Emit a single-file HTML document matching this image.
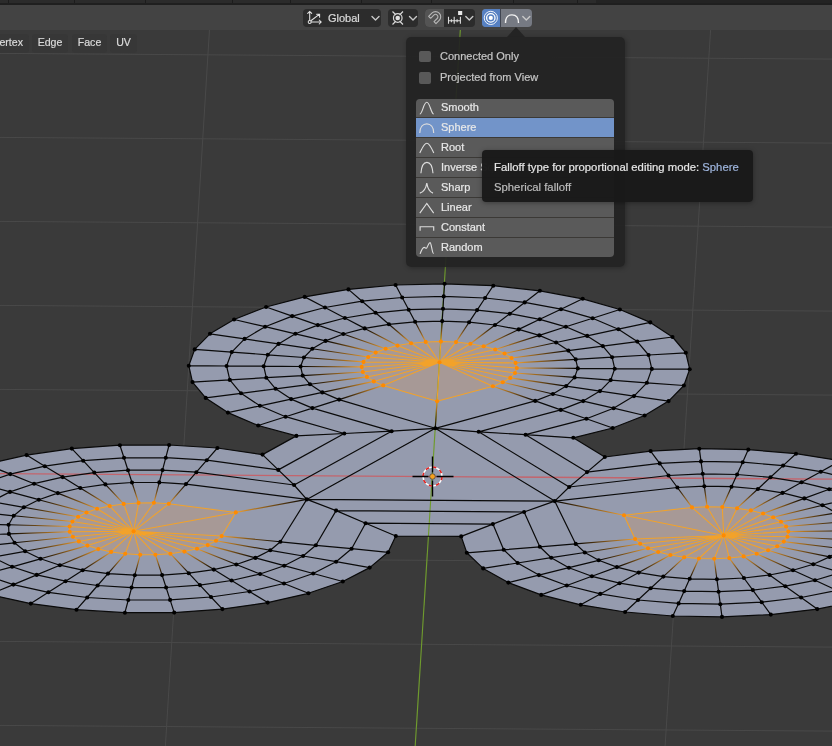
<!DOCTYPE html>
<html><head><meta charset="utf-8">
<style>
*{margin:0;padding:0;box-sizing:border-box}
html,body{-webkit-text-stroke:0.2px currentColor;width:832px;height:746px;overflow:hidden;background:#3a3a3a;font-family:"Liberation Sans",sans-serif}
#vp{position:absolute;left:0;top:0;width:832px;height:746px}
.abs{position:absolute}
.t{will-change:transform}
#topstrip{position:absolute;left:0;top:0;width:832px;height:5px;background:#2b2b2b;border-bottom:2px solid #1f1f1f}
.tsep{position:absolute;top:0;width:1px;height:3px;background:#1c1c1c}
#header{position:absolute;left:0;top:5px;width:832px;height:25px;background:#434343}
.btn{position:absolute;border-radius:4px}
.modebtn{position:absolute;will-change:transform;top:34px;height:18.5px;background:#373737;border-radius:3px;color:#dadada;font-size:10.6px;line-height:17px;text-align:center}
#popup{position:absolute;left:405.5px;top:36.8px;width:219px;height:230.3px;background:rgba(34,34,34,0.93);border-radius:5px;box-shadow:1px 1px 5px rgba(0,0,0,0.3)}
#ptr{position:absolute;left:506.8px;top:26.8px;width:0;height:0;border-left:9.5px solid transparent;border-right:9.5px solid transparent;border-bottom:10px solid rgba(34,34,34,0.93)}
.cb{position:absolute;left:13.3px;width:12.4px;height:11.6px;background:#595959;border-radius:2px}
.cbl{position:absolute;will-change:transform;left:34.2px;color:#c6c6c6;font-size:11px;line-height:14px;white-space:nowrap}
#list{position:absolute;left:10.5px;top:62px;width:198px;height:158px;background:#5a5a5a;border-radius:4px;overflow:hidden}
.row{position:absolute;left:0;width:198px}
.rt{position:absolute;will-change:transform;left:24.8px;color:#e8e8e8;font-size:11px;line-height:18px;white-space:nowrap}
.ico{position:absolute;left:0}
.sep{position:absolute;left:0;width:198px;height:1.2px;background:#3b3936}
#tip{position:absolute;left:481.5px;top:150px;width:271.5px;height:52px;background:rgba(25,25,25,0.98);border-radius:4px;box-shadow:0 1px 5px rgba(0,0,0,0.35)}
.tt{position:absolute;will-change:transform;left:12.3px;font-size:11.3px;line-height:14px;white-space:nowrap}
</style></head><body>
<svg id="vp" width="832" height="746" viewBox="0 0 832 746">
<path d="M0 53.4L832 59.1M0 137.4L832 143.1M0 221.4L832 227.1M0 305.4L832 311.1M0 389.4L832 395.1M0 557.4L832 563.1M0 641.4L832 647.1M0 725.4L832 731.1M211.3 0L165.4 746M712.5 0L665.1 746" stroke="#494949" stroke-width="1" fill="none"/>
<g fill="#959bae"><polygon points="612.7,428.0 644.6,415.5 668.6,401.1 683.9,385.5 689.7,369.2 685.8,352.8 672.5,337.0 650.3,322.4 619.9,309.5 582.7,298.8 539.9,290.8 493.3,285.7 444.6,283.8 395.6,285.0 348.4,289.4 304.7,296.9 266.1,307.0 234.1,319.5 210.0,333.8 194.7,349.4 188.8,365.7 192.5,382.1 205.7,397.9 227.9,412.6 258.2,425.5 296.4,435.9 344.3,433.5 391.6,431.2 435.3,428.3 478.7,431.8 525.6,434.7 573.3,437.8"/><polygon points="435.3,428.3 391.6,431.2 344.3,433.5 296.4,435.9 262.5,454.6 278.3,469.9 294.1,485.0 306.8,499.4"/><polygon points="217.4,448.0 169.1,445.0 119.9,445.2 71.8,448.6 26.6,455.1 -14.0,464.4 -48.5,476.2 -75.4,490.0 -93.8,505.3 -103.0,521.5 -102.5,538.0 -92.5,554.2 -73.3,569.4 -45.5,583.0 -10.4,594.5 30.8,603.6 76.5,609.7 124.9,612.7 174.2,612.6 222.4,609.1 267.7,602.6 308.4,593.3 342.8,581.5 369.7,567.6 388.1,552.3 395.8,536.0 365.6,523.2 336.1,510.6 306.8,499.4 294.1,485.0 278.3,469.9 262.5,454.6"/><polygon points="306.8,499.4 336.1,510.6 365.6,523.2 395.8,536.0 461.2,536.4 492.9,524.1 524.1,512.0 554.7,501.1"/><polygon points="466.8,552.8 483.2,568.4 508.3,582.6 541.2,594.9 580.7,604.8 625.1,612.0 672.8,616.0 722.0,616.9 770.8,614.6 817.2,609.1 859.6,600.6 896.2,589.6 925.6,576.4 946.8,561.5 958.9,545.5 961.4,529.0 954.3,512.7 937.9,497.1 912.7,482.9 879.8,470.7 840.4,460.8 796.0,453.7 748.3,449.6 699.3,448.7 650.6,451.1 604.8,457.0 587.0,472.1 569.2,487.0 554.7,501.1 524.1,512.0 492.9,524.1 461.2,536.4"/><polygon points="554.7,501.1 569.2,487.0 587.0,472.1 604.8,457.0 573.3,437.8 525.6,434.7 478.7,431.8 435.3,428.3"/><polygon points="435.3,428.3 306.8,499.4 554.7,501.1"/></g>
<g fill="#c8946a" fill-opacity="0.35"><polygon points="492.9,386.2 502.8,382.3 510.3,377.9 515.0,373.0 516.8,368.0 515.6,362.9 511.5,358.0 504.6,353.5 495.2,349.5 483.7,346.2 470.4,343.7 456.0,342.1 440.9,341.5 425.7,341.9 411.1,343.3 397.5,345.6 385.6,348.7 375.7,352.6 368.2,357.0 363.5,361.9 361.7,366.9 362.8,372.0 366.9,376.9 373.8,381.4 383.2,385.4 437.1,401.3"/><polygon points="168.8,503.8 153.9,502.8 138.6,502.9 123.7,503.9 109.7,506.0 97.1,508.8 86.5,512.5 78.1,516.8 72.4,521.5 69.6,526.5 69.7,531.7 72.9,536.7 78.8,541.4 87.4,545.6 98.3,549.1 111.1,551.9 125.2,553.8 140.2,554.8 155.4,554.7 170.4,553.7 184.4,551.6 197.0,548.8 207.7,545.1 216.0,540.8 221.7,536.1 235.8,512.4"/><polygon points="635.1,539.0 640.2,543.8 648.0,548.2 658.2,552.0 670.4,555.0 684.2,557.3 698.9,558.5 714.2,558.8 729.3,558.1 743.6,556.4 756.7,553.8 768.1,550.3 777.2,546.2 783.8,541.6 787.5,536.7 788.3,531.6 786.1,526.5 781.0,521.7 773.2,517.3 763.1,513.5 750.8,510.4 737.1,508.2 722.3,507.0 707.1,506.7 692.0,507.4 624.0,515.2"/></g>

<path d="M462.2 0L415.2 746" stroke="#6f9b2e" stroke-width="1.15" fill="none"/>
<path d="M0 473.6L832 479.2" stroke="#c4646c" stroke-width="1.3" fill="none"/>
<defs><linearGradient id="g0" gradientUnits="userSpaceOnUse" x1="492.9" y1="386.2" x2="535.2" y2="400.9"><stop offset="0" stop-color="#f0a030"/><stop offset="1" stop-color="#000"/></linearGradient><linearGradient id="g1" gradientUnits="userSpaceOnUse" x1="502.8" y1="382.3" x2="552.9" y2="394.0"><stop offset="0" stop-color="#f0a030"/><stop offset="1" stop-color="#000"/></linearGradient><linearGradient id="g2" gradientUnits="userSpaceOnUse" x1="510.3" y1="377.9" x2="566.2" y2="386.1"><stop offset="0" stop-color="#f0a030"/><stop offset="1" stop-color="#000"/></linearGradient><linearGradient id="g3" gradientUnits="userSpaceOnUse" x1="515.0" y1="373.0" x2="574.6" y2="377.4"><stop offset="0" stop-color="#f0a030"/><stop offset="1" stop-color="#000"/></linearGradient><linearGradient id="g4" gradientUnits="userSpaceOnUse" x1="516.8" y1="368.0" x2="577.8" y2="368.4"><stop offset="0" stop-color="#f0a030"/><stop offset="1" stop-color="#000"/></linearGradient><linearGradient id="g5" gradientUnits="userSpaceOnUse" x1="515.6" y1="362.9" x2="575.7" y2="359.4"><stop offset="0" stop-color="#f0a030"/><stop offset="1" stop-color="#000"/></linearGradient><linearGradient id="g6" gradientUnits="userSpaceOnUse" x1="511.5" y1="358.0" x2="568.4" y2="350.6"><stop offset="0" stop-color="#f0a030"/><stop offset="1" stop-color="#000"/></linearGradient><linearGradient id="g7" gradientUnits="userSpaceOnUse" x1="504.6" y1="353.5" x2="556.1" y2="342.5"><stop offset="0" stop-color="#f0a030"/><stop offset="1" stop-color="#000"/></linearGradient><linearGradient id="g8" gradientUnits="userSpaceOnUse" x1="495.2" y1="349.5" x2="539.3" y2="335.4"><stop offset="0" stop-color="#f0a030"/><stop offset="1" stop-color="#000"/></linearGradient><linearGradient id="g9" gradientUnits="userSpaceOnUse" x1="483.7" y1="346.2" x2="518.7" y2="329.4"><stop offset="0" stop-color="#f0a030"/><stop offset="1" stop-color="#000"/></linearGradient><linearGradient id="g10" gradientUnits="userSpaceOnUse" x1="470.4" y1="343.7" x2="495.0" y2="325.0"><stop offset="0" stop-color="#f0a030"/><stop offset="1" stop-color="#000"/></linearGradient><linearGradient id="g11" gradientUnits="userSpaceOnUse" x1="456.0" y1="342.1" x2="469.1" y2="322.2"><stop offset="0" stop-color="#f0a030"/><stop offset="1" stop-color="#000"/></linearGradient><linearGradient id="g12" gradientUnits="userSpaceOnUse" x1="440.9" y1="341.5" x2="442.2" y2="321.1"><stop offset="0" stop-color="#f0a030"/><stop offset="1" stop-color="#000"/></linearGradient><linearGradient id="g13" gradientUnits="userSpaceOnUse" x1="425.7" y1="341.9" x2="415.1" y2="321.8"><stop offset="0" stop-color="#f0a030"/><stop offset="1" stop-color="#000"/></linearGradient><linearGradient id="g14" gradientUnits="userSpaceOnUse" x1="411.1" y1="343.3" x2="388.9" y2="324.3"><stop offset="0" stop-color="#f0a030"/><stop offset="1" stop-color="#000"/></linearGradient><linearGradient id="g15" gradientUnits="userSpaceOnUse" x1="397.5" y1="345.6" x2="364.7" y2="328.4"><stop offset="0" stop-color="#f0a030"/><stop offset="1" stop-color="#000"/></linearGradient><linearGradient id="g16" gradientUnits="userSpaceOnUse" x1="385.6" y1="348.7" x2="343.3" y2="334.0"><stop offset="0" stop-color="#f0a030"/><stop offset="1" stop-color="#000"/></linearGradient><linearGradient id="g17" gradientUnits="userSpaceOnUse" x1="375.7" y1="352.6" x2="325.6" y2="340.9"><stop offset="0" stop-color="#f0a030"/><stop offset="1" stop-color="#000"/></linearGradient><linearGradient id="g18" gradientUnits="userSpaceOnUse" x1="368.2" y1="357.0" x2="312.3" y2="348.8"><stop offset="0" stop-color="#f0a030"/><stop offset="1" stop-color="#000"/></linearGradient><linearGradient id="g19" gradientUnits="userSpaceOnUse" x1="363.5" y1="361.9" x2="303.9" y2="357.5"><stop offset="0" stop-color="#f0a030"/><stop offset="1" stop-color="#000"/></linearGradient><linearGradient id="g20" gradientUnits="userSpaceOnUse" x1="361.7" y1="366.9" x2="300.6" y2="366.5"><stop offset="0" stop-color="#f0a030"/><stop offset="1" stop-color="#000"/></linearGradient><linearGradient id="g21" gradientUnits="userSpaceOnUse" x1="362.8" y1="372.0" x2="302.7" y2="375.6"><stop offset="0" stop-color="#f0a030"/><stop offset="1" stop-color="#000"/></linearGradient><linearGradient id="g22" gradientUnits="userSpaceOnUse" x1="366.9" y1="376.9" x2="310.0" y2="384.3"><stop offset="0" stop-color="#f0a030"/><stop offset="1" stop-color="#000"/></linearGradient><linearGradient id="g23" gradientUnits="userSpaceOnUse" x1="373.8" y1="381.4" x2="322.3" y2="392.4"><stop offset="0" stop-color="#f0a030"/><stop offset="1" stop-color="#000"/></linearGradient><linearGradient id="g24" gradientUnits="userSpaceOnUse" x1="383.2" y1="385.4" x2="339.1" y2="399.6"><stop offset="0" stop-color="#f0a030"/><stop offset="1" stop-color="#000"/></linearGradient><linearGradient id="g25" gradientUnits="userSpaceOnUse" x1="437.1" y1="401.3" x2="435.3" y2="428.3"><stop offset="0" stop-color="#f0a030"/><stop offset="1" stop-color="#000"/></linearGradient><linearGradient id="g26" gradientUnits="userSpaceOnUse" x1="168.8" y1="503.8" x2="186.0" y2="484.1"><stop offset="0" stop-color="#f0a030"/><stop offset="1" stop-color="#000"/></linearGradient><linearGradient id="g27" gradientUnits="userSpaceOnUse" x1="153.9" y1="502.8" x2="159.3" y2="482.4"><stop offset="0" stop-color="#f0a030"/><stop offset="1" stop-color="#000"/></linearGradient><linearGradient id="g28" gradientUnits="userSpaceOnUse" x1="138.6" y1="502.9" x2="132.0" y2="482.5"><stop offset="0" stop-color="#f0a030"/><stop offset="1" stop-color="#000"/></linearGradient><linearGradient id="g29" gradientUnits="userSpaceOnUse" x1="123.7" y1="503.9" x2="105.4" y2="484.4"><stop offset="0" stop-color="#f0a030"/><stop offset="1" stop-color="#000"/></linearGradient><linearGradient id="g30" gradientUnits="userSpaceOnUse" x1="109.7" y1="506.0" x2="80.3" y2="488.0"><stop offset="0" stop-color="#f0a030"/><stop offset="1" stop-color="#000"/></linearGradient><linearGradient id="g31" gradientUnits="userSpaceOnUse" x1="97.1" y1="508.8" x2="57.8" y2="493.1"><stop offset="0" stop-color="#f0a030"/><stop offset="1" stop-color="#000"/></linearGradient><linearGradient id="g32" gradientUnits="userSpaceOnUse" x1="86.5" y1="512.5" x2="38.8" y2="499.7"><stop offset="0" stop-color="#f0a030"/><stop offset="1" stop-color="#000"/></linearGradient><linearGradient id="g33" gradientUnits="userSpaceOnUse" x1="78.1" y1="516.8" x2="23.9" y2="507.3"><stop offset="0" stop-color="#f0a030"/><stop offset="1" stop-color="#000"/></linearGradient><linearGradient id="g34" gradientUnits="userSpaceOnUse" x1="72.4" y1="521.5" x2="13.7" y2="515.8"><stop offset="0" stop-color="#f0a030"/><stop offset="1" stop-color="#000"/></linearGradient><linearGradient id="g35" gradientUnits="userSpaceOnUse" x1="69.6" y1="526.5" x2="8.6" y2="524.8"><stop offset="0" stop-color="#f0a030"/><stop offset="1" stop-color="#000"/></linearGradient><linearGradient id="g36" gradientUnits="userSpaceOnUse" x1="69.7" y1="531.7" x2="8.9" y2="533.9"><stop offset="0" stop-color="#f0a030"/><stop offset="1" stop-color="#000"/></linearGradient><linearGradient id="g37" gradientUnits="userSpaceOnUse" x1="72.9" y1="536.7" x2="14.5" y2="542.8"><stop offset="0" stop-color="#f0a030"/><stop offset="1" stop-color="#000"/></linearGradient><linearGradient id="g38" gradientUnits="userSpaceOnUse" x1="78.8" y1="541.4" x2="25.1" y2="551.3"><stop offset="0" stop-color="#f0a030"/><stop offset="1" stop-color="#000"/></linearGradient><linearGradient id="g39" gradientUnits="userSpaceOnUse" x1="87.4" y1="545.6" x2="40.5" y2="558.8"><stop offset="0" stop-color="#f0a030"/><stop offset="1" stop-color="#000"/></linearGradient><linearGradient id="g40" gradientUnits="userSpaceOnUse" x1="98.3" y1="549.1" x2="59.9" y2="565.2"><stop offset="0" stop-color="#f0a030"/><stop offset="1" stop-color="#000"/></linearGradient><linearGradient id="g41" gradientUnits="userSpaceOnUse" x1="111.1" y1="551.9" x2="82.7" y2="570.2"><stop offset="0" stop-color="#f0a030"/><stop offset="1" stop-color="#000"/></linearGradient><linearGradient id="g42" gradientUnits="userSpaceOnUse" x1="125.2" y1="553.8" x2="108.0" y2="573.6"><stop offset="0" stop-color="#f0a030"/><stop offset="1" stop-color="#000"/></linearGradient><linearGradient id="g43" gradientUnits="userSpaceOnUse" x1="140.2" y1="554.8" x2="134.8" y2="575.2"><stop offset="0" stop-color="#f0a030"/><stop offset="1" stop-color="#000"/></linearGradient><linearGradient id="g44" gradientUnits="userSpaceOnUse" x1="155.4" y1="554.7" x2="162.1" y2="575.1"><stop offset="0" stop-color="#f0a030"/><stop offset="1" stop-color="#000"/></linearGradient><linearGradient id="g45" gradientUnits="userSpaceOnUse" x1="170.4" y1="553.7" x2="188.7" y2="573.2"><stop offset="0" stop-color="#f0a030"/><stop offset="1" stop-color="#000"/></linearGradient><linearGradient id="g46" gradientUnits="userSpaceOnUse" x1="184.4" y1="551.6" x2="213.8" y2="569.6"><stop offset="0" stop-color="#f0a030"/><stop offset="1" stop-color="#000"/></linearGradient><linearGradient id="g47" gradientUnits="userSpaceOnUse" x1="197.0" y1="548.8" x2="236.3" y2="564.5"><stop offset="0" stop-color="#f0a030"/><stop offset="1" stop-color="#000"/></linearGradient><linearGradient id="g48" gradientUnits="userSpaceOnUse" x1="207.7" y1="545.1" x2="255.4" y2="557.9"><stop offset="0" stop-color="#f0a030"/><stop offset="1" stop-color="#000"/></linearGradient><linearGradient id="g49" gradientUnits="userSpaceOnUse" x1="216.0" y1="540.8" x2="270.3" y2="550.3"><stop offset="0" stop-color="#f0a030"/><stop offset="1" stop-color="#000"/></linearGradient><linearGradient id="g50" gradientUnits="userSpaceOnUse" x1="221.7" y1="536.1" x2="280.4" y2="541.8"><stop offset="0" stop-color="#f0a030"/><stop offset="1" stop-color="#000"/></linearGradient><linearGradient id="g51" gradientUnits="userSpaceOnUse" x1="235.8" y1="512.4" x2="306.8" y2="499.4"><stop offset="0" stop-color="#f0a030"/><stop offset="1" stop-color="#000"/></linearGradient><linearGradient id="g52" gradientUnits="userSpaceOnUse" x1="635.1" y1="539.0" x2="575.7" y2="543.9"><stop offset="0" stop-color="#f0a030"/><stop offset="1" stop-color="#000"/></linearGradient><linearGradient id="g53" gradientUnits="userSpaceOnUse" x1="640.2" y1="543.8" x2="584.8" y2="552.5"><stop offset="0" stop-color="#f0a030"/><stop offset="1" stop-color="#000"/></linearGradient><linearGradient id="g54" gradientUnits="userSpaceOnUse" x1="648.0" y1="548.2" x2="598.7" y2="560.3"><stop offset="0" stop-color="#f0a030"/><stop offset="1" stop-color="#000"/></linearGradient><linearGradient id="g55" gradientUnits="userSpaceOnUse" x1="658.2" y1="552.0" x2="616.9" y2="567.1"><stop offset="0" stop-color="#f0a030"/><stop offset="1" stop-color="#000"/></linearGradient><linearGradient id="g56" gradientUnits="userSpaceOnUse" x1="670.4" y1="555.0" x2="638.7" y2="572.6"><stop offset="0" stop-color="#f0a030"/><stop offset="1" stop-color="#000"/></linearGradient><linearGradient id="g57" gradientUnits="userSpaceOnUse" x1="684.2" y1="557.3" x2="663.3" y2="576.6"><stop offset="0" stop-color="#f0a030"/><stop offset="1" stop-color="#000"/></linearGradient><linearGradient id="g58" gradientUnits="userSpaceOnUse" x1="698.9" y1="558.5" x2="689.7" y2="578.8"><stop offset="0" stop-color="#f0a030"/><stop offset="1" stop-color="#000"/></linearGradient><linearGradient id="g59" gradientUnits="userSpaceOnUse" x1="714.2" y1="558.8" x2="716.9" y2="579.3"><stop offset="0" stop-color="#f0a030"/><stop offset="1" stop-color="#000"/></linearGradient><linearGradient id="g60" gradientUnits="userSpaceOnUse" x1="729.3" y1="558.1" x2="743.9" y2="578.0"><stop offset="0" stop-color="#f0a030"/><stop offset="1" stop-color="#000"/></linearGradient><linearGradient id="g61" gradientUnits="userSpaceOnUse" x1="743.6" y1="556.4" x2="769.6" y2="575.0"><stop offset="0" stop-color="#f0a030"/><stop offset="1" stop-color="#000"/></linearGradient><linearGradient id="g62" gradientUnits="userSpaceOnUse" x1="756.7" y1="553.8" x2="793.0" y2="570.3"><stop offset="0" stop-color="#f0a030"/><stop offset="1" stop-color="#000"/></linearGradient><linearGradient id="g63" gradientUnits="userSpaceOnUse" x1="768.1" y1="550.3" x2="813.3" y2="564.2"><stop offset="0" stop-color="#f0a030"/><stop offset="1" stop-color="#000"/></linearGradient><linearGradient id="g64" gradientUnits="userSpaceOnUse" x1="777.2" y1="546.2" x2="829.6" y2="556.9"><stop offset="0" stop-color="#f0a030"/><stop offset="1" stop-color="#000"/></linearGradient><linearGradient id="g65" gradientUnits="userSpaceOnUse" x1="783.8" y1="541.6" x2="841.3" y2="548.6"><stop offset="0" stop-color="#f0a030"/><stop offset="1" stop-color="#000"/></linearGradient><linearGradient id="g66" gradientUnits="userSpaceOnUse" x1="787.5" y1="536.7" x2="848.0" y2="539.8"><stop offset="0" stop-color="#f0a030"/><stop offset="1" stop-color="#000"/></linearGradient><linearGradient id="g67" gradientUnits="userSpaceOnUse" x1="788.3" y1="531.6" x2="849.4" y2="530.7"><stop offset="0" stop-color="#f0a030"/><stop offset="1" stop-color="#000"/></linearGradient><linearGradient id="g68" gradientUnits="userSpaceOnUse" x1="786.1" y1="526.5" x2="845.5" y2="521.6"><stop offset="0" stop-color="#f0a030"/><stop offset="1" stop-color="#000"/></linearGradient><linearGradient id="g69" gradientUnits="userSpaceOnUse" x1="781.0" y1="521.7" x2="836.4" y2="513.0"><stop offset="0" stop-color="#f0a030"/><stop offset="1" stop-color="#000"/></linearGradient><linearGradient id="g70" gradientUnits="userSpaceOnUse" x1="773.2" y1="517.3" x2="822.5" y2="505.2"><stop offset="0" stop-color="#f0a030"/><stop offset="1" stop-color="#000"/></linearGradient><linearGradient id="g71" gradientUnits="userSpaceOnUse" x1="763.1" y1="513.5" x2="804.3" y2="498.4"><stop offset="0" stop-color="#f0a030"/><stop offset="1" stop-color="#000"/></linearGradient><linearGradient id="g72" gradientUnits="userSpaceOnUse" x1="750.8" y1="510.4" x2="782.5" y2="492.9"><stop offset="0" stop-color="#f0a030"/><stop offset="1" stop-color="#000"/></linearGradient><linearGradient id="g73" gradientUnits="userSpaceOnUse" x1="737.1" y1="508.2" x2="757.9" y2="489.0"><stop offset="0" stop-color="#f0a030"/><stop offset="1" stop-color="#000"/></linearGradient><linearGradient id="g74" gradientUnits="userSpaceOnUse" x1="722.3" y1="507.0" x2="731.5" y2="486.7"><stop offset="0" stop-color="#f0a030"/><stop offset="1" stop-color="#000"/></linearGradient><linearGradient id="g75" gradientUnits="userSpaceOnUse" x1="707.1" y1="506.7" x2="704.3" y2="486.2"><stop offset="0" stop-color="#f0a030"/><stop offset="1" stop-color="#000"/></linearGradient><linearGradient id="g76" gradientUnits="userSpaceOnUse" x1="692.0" y1="507.4" x2="677.4" y2="487.5"><stop offset="0" stop-color="#f0a030"/><stop offset="1" stop-color="#000"/></linearGradient><linearGradient id="g77" gradientUnits="userSpaceOnUse" x1="624.0" y1="515.2" x2="554.7" y2="501.1"><stop offset="0" stop-color="#f0a030"/><stop offset="1" stop-color="#000"/></linearGradient></defs>
<path d="M535.2 400.9L552.9 394.0M560.8 409.9L583.2 401.1M586.4 418.8L613.6 408.2M612.7 428.0L644.6 415.5M552.9 394.0L566.2 386.1M583.2 401.1L600.0 391.1M613.6 408.2L634.0 396.1M644.6 415.5L668.6 401.1M566.2 386.1L574.6 377.4M600.0 391.1L610.7 380.1M634.0 396.1L646.9 382.8M668.6 401.1L683.9 385.5M574.6 377.4L577.8 368.4M610.7 380.1L614.7 368.7M646.9 382.8L651.8 368.9M683.9 385.5L689.7 369.2M577.8 368.4L575.7 359.4M614.7 368.7L612.1 357.2M651.8 368.9L648.6 355.0M689.7 369.2L685.8 352.8M575.7 359.4L568.4 350.6M612.1 357.2L602.8 346.1M648.6 355.0L637.3 341.6M685.8 352.8L672.5 337.0M568.4 350.6L556.1 342.5M602.8 346.1L587.2 335.9M637.3 341.6L618.4 329.2M672.5 337.0L650.3 322.4M556.1 342.5L539.3 335.4M587.2 335.9L565.9 326.8M618.4 329.2L592.6 318.2M650.3 322.4L619.9 309.5M539.3 335.4L518.7 329.4M565.9 326.8L539.8 319.3M592.6 318.2L561.0 309.2M619.9 309.5L582.7 298.8M518.7 329.4L495.0 325.0M539.8 319.3L509.8 313.7M561.0 309.2L524.7 302.4M582.7 298.8L539.9 290.8M495.0 325.0L469.1 322.2M509.8 313.7L477.1 310.1M524.7 302.4L485.1 298.0M539.9 290.8L493.3 285.7M469.1 322.2L442.2 321.1M477.1 310.1L443.0 308.8M485.1 298.0L443.7 296.4M493.3 285.7L444.6 283.8M442.2 321.1L415.1 321.8M443.0 308.8L408.7 309.7M443.7 296.4L402.2 297.5M444.6 283.8L395.6 285.0M415.1 321.8L388.9 324.3M408.7 309.7L375.6 312.8M402.2 297.5L362.1 301.2M395.6 285.0L348.4 289.4M388.9 324.3L364.7 328.4M375.6 312.8L344.9 318.0M362.1 301.2L325.0 307.5M348.4 289.4L304.7 296.9M364.7 328.4L343.3 334.0M344.9 318.0L317.8 325.1M325.0 307.5L292.2 316.1M304.7 296.9L266.1 307.0M343.3 334.0L325.6 340.9M317.8 325.1L295.4 333.8M292.2 316.1L265.1 326.7M266.1 307.0L234.1 319.5M325.6 340.9L312.3 348.8M295.4 333.8L278.5 343.9M265.1 326.7L244.6 338.9M234.1 319.5L210.0 333.8M312.3 348.8L303.9 357.5M278.5 343.9L267.8 354.8M244.6 338.9L231.7 352.1M210.0 333.8L194.7 349.4M303.9 357.5L300.6 366.5M267.8 354.8L263.7 366.2M231.7 352.1L226.6 366.0M194.7 349.4L188.8 365.7M300.6 366.5L302.7 375.6M263.7 366.2L266.3 377.7M226.6 366.0L229.8 379.9M188.8 365.7L192.5 382.1M302.7 375.6L310.0 384.3M266.3 377.7L275.6 388.8M229.8 379.9L241.0 393.3M192.5 382.1L205.7 397.9M310.0 384.3L322.3 392.4M275.6 388.8L291.1 399.1M241.0 393.3L259.9 405.8M205.7 397.9L227.9 412.6M322.3 392.4L339.1 399.6M291.1 399.1L312.4 408.1M259.9 405.8L285.6 416.7M227.9 412.6L258.2 425.5M535.2 400.9L560.8 409.9M560.8 409.9L586.4 418.8M586.4 418.8L612.7 428.0M552.9 394.0L583.2 401.1M583.2 401.1L613.6 408.2M613.6 408.2L644.6 415.5M566.2 386.1L600.0 391.1M600.0 391.1L634.0 396.1M634.0 396.1L668.6 401.1M574.6 377.4L610.7 380.1M610.7 380.1L646.9 382.8M646.9 382.8L683.9 385.5M577.8 368.4L614.7 368.7M614.7 368.7L651.8 368.9M651.8 368.9L689.7 369.2M575.7 359.4L612.1 357.2M612.1 357.2L648.6 355.0M648.6 355.0L685.8 352.8M568.4 350.6L602.8 346.1M602.8 346.1L637.3 341.6M637.3 341.6L672.5 337.0M556.1 342.5L587.2 335.9M587.2 335.9L618.4 329.2M618.4 329.2L650.3 322.4M539.3 335.4L565.9 326.8M565.9 326.8L592.6 318.2M592.6 318.2L619.9 309.5M518.7 329.4L539.8 319.3M539.8 319.3L561.0 309.2M561.0 309.2L582.7 298.8M495.0 325.0L509.8 313.7M509.8 313.7L524.7 302.4M524.7 302.4L539.9 290.8M469.1 322.2L477.1 310.1M477.1 310.1L485.1 298.0M485.1 298.0L493.3 285.7M442.2 321.1L443.0 308.8M443.0 308.8L443.7 296.4M443.7 296.4L444.6 283.8M415.1 321.8L408.7 309.7M408.7 309.7L402.2 297.5M402.2 297.5L395.6 285.0M388.9 324.3L375.6 312.8M375.6 312.8L362.1 301.2M362.1 301.2L348.4 289.4M364.7 328.4L344.9 318.0M344.9 318.0L325.0 307.5M325.0 307.5L304.7 296.9M343.3 334.0L317.8 325.1M317.8 325.1L292.2 316.1M292.2 316.1L266.1 307.0M325.6 340.9L295.4 333.8M295.4 333.8L265.1 326.7M265.1 326.7L234.1 319.5M312.3 348.8L278.5 343.9M278.5 343.9L244.6 338.9M244.6 338.9L210.0 333.8M303.9 357.5L267.8 354.8M267.8 354.8L231.7 352.1M231.7 352.1L194.7 349.4M300.6 366.5L263.7 366.2M263.7 366.2L226.6 366.0M226.6 366.0L188.8 365.7M302.7 375.6L266.3 377.7M266.3 377.7L229.8 379.9M229.8 379.9L192.5 382.1M310.0 384.3L275.6 388.8M275.6 388.8L241.0 393.3M241.0 393.3L205.7 397.9M322.3 392.4L291.1 399.1M291.1 399.1L259.9 405.8M259.9 405.8L227.9 412.6M339.1 399.6L312.4 408.1M312.4 408.1L285.6 416.7M285.6 416.7L258.2 425.5M339.1 399.6L435.3 428.3M535.2 400.9L435.3 428.3M312.4 408.1L391.6 431.2M560.8 409.9L478.7 431.8M285.6 416.7L344.3 433.5M586.4 418.8L525.6 434.7M258.2 425.5L296.4 435.9M612.7 428.0L573.3 437.8M435.3 428.3L391.6 431.2M435.3 428.3L478.7 431.8M391.6 431.2L344.3 433.5M478.7 431.8L525.6 434.7M344.3 433.5L296.4 435.9M525.6 434.7L573.3 437.8M435.3 428.3L306.8 499.4M391.6 431.2L294.1 485.0M344.3 433.5L278.3 469.9M296.4 435.9L262.5 454.6M186.0 484.1L159.3 482.4M196.4 472.2L162.5 470.1M206.8 460.2L165.8 457.7M217.4 448.0L169.1 445.0M159.3 482.4L132.0 482.5M162.5 470.1L128.0 470.2M165.8 457.7L124.0 457.8M169.1 445.0L119.9 445.2M132.0 482.5L105.4 484.4M128.0 470.2L94.3 472.6M124.0 457.8L83.2 460.7M119.9 445.2L71.8 448.6M105.4 484.4L80.3 488.0M94.3 472.6L62.6 477.1M83.2 460.7L44.8 466.2M71.8 448.6L26.6 455.1M80.3 488.0L57.8 493.1M62.6 477.1L34.1 483.7M44.8 466.2L10.3 474.1M26.6 455.1L-14.0 464.4M57.8 493.1L38.8 499.7M34.1 483.7L10.0 491.9M10.3 474.1L-18.9 484.1M-14.0 464.4L-48.5 476.2M38.8 499.7L23.9 507.3M10.0 491.9L-8.9 501.6M-18.9 484.1L-41.8 495.9M-48.5 476.2L-75.4 490.0M23.9 507.3L13.7 515.8M-8.9 501.6L-21.8 512.3M-41.8 495.9L-57.4 508.9M-75.4 490.0L-93.8 505.3M13.7 515.8L8.6 524.8M-21.8 512.3L-28.2 523.7M-57.4 508.9L-65.2 522.6M-93.8 505.3L-103.0 521.5M8.6 524.8L8.9 533.9M-28.2 523.7L-27.9 535.3M-65.2 522.6L-64.8 536.6M-103.0 521.5L-102.5 538.0M8.9 533.9L14.5 542.8M-27.9 535.3L-20.8 546.6M-64.8 536.6L-56.3 550.4M-102.5 538.0L-92.5 554.2M14.5 542.8L25.1 551.3M-20.8 546.6L-7.3 557.2M-56.3 550.4L-39.9 563.2M-92.5 554.2L-73.3 569.4M25.1 551.3L40.5 558.8M-7.3 557.2L12.1 566.8M-39.9 563.2L-16.4 574.8M-73.3 569.4L-45.5 583.0M40.5 558.8L59.9 565.2M12.1 566.8L36.7 574.9M-16.4 574.8L13.4 584.6M-45.5 583.0L-10.4 594.5M59.9 565.2L82.7 570.2M36.7 574.9L65.6 581.2M13.4 584.6L48.4 592.3M-10.4 594.5L30.8 603.6M82.7 570.2L108.0 573.6M65.6 581.2L97.6 585.5M48.4 592.3L87.2 597.5M30.8 603.6L76.5 609.7M108.0 573.6L134.8 575.2M97.6 585.5L131.6 587.6M87.2 597.5L128.3 600.0M76.5 609.7L124.9 612.7M134.8 575.2L162.1 575.1M131.6 587.6L166.1 587.5M128.3 600.0L170.1 599.9M124.9 612.7L174.2 612.6M162.1 575.1L188.7 573.2M166.1 587.5L199.9 585.1M170.1 599.9L211.0 597.0M174.2 612.6L222.4 609.1M188.7 573.2L213.8 569.6M199.9 585.1L231.6 580.5M211.0 597.0L249.5 591.5M222.4 609.1L267.7 602.6M213.8 569.6L236.3 564.5M231.6 580.5L260.1 574.0M249.5 591.5L284.0 583.5M267.7 602.6L308.4 593.3M236.3 564.5L255.4 557.9M260.1 574.0L284.2 565.7M284.0 583.5L313.2 573.5M308.4 593.3L342.8 581.5M255.4 557.9L270.3 550.3M284.2 565.7L303.1 556.0M313.2 573.5L336.1 561.7M342.8 581.5L369.7 567.6M270.3 550.3L280.4 541.8M303.1 556.0L315.9 545.3M336.1 561.7L351.6 548.7M369.7 567.6L388.1 552.3M186.0 484.1L196.4 472.2M196.4 472.2L206.8 460.2M206.8 460.2L217.4 448.0M159.3 482.4L162.5 470.1M162.5 470.1L165.8 457.7M165.8 457.7L169.1 445.0M132.0 482.5L128.0 470.2M128.0 470.2L124.0 457.8M124.0 457.8L119.9 445.2M105.4 484.4L94.3 472.6M94.3 472.6L83.2 460.7M83.2 460.7L71.8 448.6M80.3 488.0L62.6 477.1M62.6 477.1L44.8 466.2M44.8 466.2L26.6 455.1M57.8 493.1L34.1 483.7M34.1 483.7L10.3 474.1M10.3 474.1L-14.0 464.4M38.8 499.7L10.0 491.9M10.0 491.9L-18.9 484.1M-18.9 484.1L-48.5 476.2M23.9 507.3L-8.9 501.6M-8.9 501.6L-41.8 495.9M-41.8 495.9L-75.4 490.0M13.7 515.8L-21.8 512.3M-21.8 512.3L-57.4 508.9M-57.4 508.9L-93.8 505.3M8.6 524.8L-28.2 523.7M-28.2 523.7L-65.2 522.6M-65.2 522.6L-103.0 521.5M8.9 533.9L-27.9 535.3M-27.9 535.3L-64.8 536.6M-64.8 536.6L-102.5 538.0M14.5 542.8L-20.8 546.6M-20.8 546.6L-56.3 550.4M-56.3 550.4L-92.5 554.2M25.1 551.3L-7.3 557.2M-7.3 557.2L-39.9 563.2M-39.9 563.2L-73.3 569.4M40.5 558.8L12.1 566.8M12.1 566.8L-16.4 574.8M-16.4 574.8L-45.5 583.0M59.9 565.2L36.7 574.9M36.7 574.9L13.4 584.6M13.4 584.6L-10.4 594.5M82.7 570.2L65.6 581.2M65.6 581.2L48.4 592.3M48.4 592.3L30.8 603.6M108.0 573.6L97.6 585.5M97.6 585.5L87.2 597.5M87.2 597.5L76.5 609.7M134.8 575.2L131.6 587.6M131.6 587.6L128.3 600.0M128.3 600.0L124.9 612.7M162.1 575.1L166.1 587.5M166.1 587.5L170.1 599.9M170.1 599.9L174.2 612.6M188.7 573.2L199.9 585.1M199.9 585.1L211.0 597.0M211.0 597.0L222.4 609.1M213.8 569.6L231.6 580.5M231.6 580.5L249.5 591.5M249.5 591.5L267.7 602.6M236.3 564.5L260.1 574.0M260.1 574.0L284.0 583.5M284.0 583.5L308.4 593.3M255.4 557.9L284.2 565.7M284.2 565.7L313.2 573.5M313.2 573.5L342.8 581.5M270.3 550.3L303.1 556.0M303.1 556.0L336.1 561.7M336.1 561.7L369.7 567.6M280.4 541.8L315.9 545.3M315.9 545.3L351.6 548.7M351.6 548.7L388.1 552.3M280.4 541.8L306.8 499.4M186.0 484.1L306.8 499.4M315.9 545.3L336.1 510.6M196.4 472.2L294.1 485.0M351.6 548.7L365.6 523.2M206.8 460.2L278.3 469.9M388.1 552.3L395.8 536.0M217.4 448.0L262.5 454.6M306.8 499.4L336.1 510.6M306.8 499.4L294.1 485.0M336.1 510.6L365.6 523.2M294.1 485.0L278.3 469.9M365.6 523.2L395.8 536.0M278.3 469.9L262.5 454.6M306.8 499.4L554.7 501.1M336.1 510.6L524.1 512.0M365.6 523.2L492.9 524.1M395.8 536.0L461.2 536.4M575.7 543.9L584.8 552.5M539.8 546.8L551.2 557.7M503.7 549.8L517.6 563.0M466.8 552.8L483.2 568.4M584.8 552.5L598.7 560.3M551.2 557.7L568.9 567.7M517.6 563.0L538.9 575.1M483.2 568.4L508.3 582.6M598.7 560.3L616.9 567.1M568.9 567.7L591.9 576.3M538.9 575.1L566.8 585.5M508.3 582.6L541.2 594.9M616.9 567.1L638.7 572.6M591.9 576.3L619.6 583.2M566.8 585.5L600.3 593.9M541.2 594.9L580.7 604.8M638.7 572.6L663.3 576.6M619.6 583.2L650.7 588.2M600.3 593.9L638.0 600.0M580.7 604.8L625.1 612.0M663.3 576.6L689.7 578.8M650.7 588.2L684.2 591.1M638.0 600.0L678.6 603.4M625.1 612.0L672.8 616.0M689.7 578.8L716.9 579.3M684.2 591.1L718.6 591.7M678.6 603.4L720.3 604.2M672.8 616.0L722.0 616.9M716.9 579.3L743.9 578.0M718.6 591.7L752.8 590.1M720.3 604.2L761.7 602.2M722.0 616.9L770.8 614.6M743.9 578.0L769.6 575.0M752.8 590.1L785.3 586.2M761.7 602.2L801.1 597.5M770.8 614.6L817.2 609.1M769.6 575.0L793.0 570.3M785.3 586.2L815.0 580.3M801.1 597.5L837.0 590.4M817.2 609.1L859.6 600.6M793.0 570.3L813.3 564.2M815.0 580.3L840.6 572.6M837.0 590.4L868.1 581.0M859.6 600.6L896.2 589.6M813.3 564.2L829.6 556.9M840.6 572.6L861.3 563.3M868.1 581.0L893.1 569.8M896.2 589.6L925.6 576.4M829.6 556.9L841.3 548.6M861.3 563.3L876.1 552.9M893.1 569.8L911.1 557.1M925.6 576.4L946.8 561.5M841.3 548.6L848.0 539.8M876.1 552.9L884.6 541.7M911.1 557.1L921.3 543.5M946.8 561.5L958.9 545.5M848.0 539.8L849.4 530.7M884.6 541.7L886.4 530.1M921.3 543.5L923.5 529.6M958.9 545.5L961.4 529.0M849.4 530.7L845.5 521.6M886.4 530.1L881.4 518.7M923.5 529.6L917.5 515.7M961.4 529.0L954.3 512.7M845.5 521.6L836.4 513.0M881.4 518.7L869.9 507.8M917.5 515.7L903.5 502.5M954.3 512.7L937.9 497.1M836.4 513.0L822.5 505.2M869.9 507.8L852.3 497.8M903.5 502.5L882.2 490.5M937.9 497.1L912.7 482.9M822.5 505.2L804.3 498.4M852.3 497.8L829.2 489.2M882.2 490.5L854.2 480.0M912.7 482.9L879.8 470.7M804.3 498.4L782.5 492.9M829.2 489.2L801.6 482.3M854.2 480.0L820.8 471.7M879.8 470.7L840.4 460.8M782.5 492.9L757.9 489.0M801.6 482.3L770.5 477.3M820.8 471.7L783.1 465.6M840.4 460.8L796.0 453.7M757.9 489.0L731.5 486.7M770.5 477.3L737.1 474.5M783.1 465.6L742.7 462.2M796.0 453.7L748.3 449.6M731.5 486.7L704.3 486.2M737.1 474.5L702.7 473.8M742.7 462.2L701.0 461.4M748.3 449.6L699.3 448.7M704.3 486.2L677.4 487.5M702.7 473.8L668.5 475.5M701.0 461.4L659.7 463.4M699.3 448.7L650.6 451.1M575.7 543.9L539.8 546.8M539.8 546.8L503.7 549.8M503.7 549.8L466.8 552.8M584.8 552.5L551.2 557.7M551.2 557.7L517.6 563.0M517.6 563.0L483.2 568.4M598.7 560.3L568.9 567.7M568.9 567.7L538.9 575.1M538.9 575.1L508.3 582.6M616.9 567.1L591.9 576.3M591.9 576.3L566.8 585.5M566.8 585.5L541.2 594.9M638.7 572.6L619.6 583.2M619.6 583.2L600.3 593.9M600.3 593.9L580.7 604.8M663.3 576.6L650.7 588.2M650.7 588.2L638.0 600.0M638.0 600.0L625.1 612.0M689.7 578.8L684.2 591.1M684.2 591.1L678.6 603.4M678.6 603.4L672.8 616.0M716.9 579.3L718.6 591.7M718.6 591.7L720.3 604.2M720.3 604.2L722.0 616.9M743.9 578.0L752.8 590.1M752.8 590.1L761.7 602.2M761.7 602.2L770.8 614.6M769.6 575.0L785.3 586.2M785.3 586.2L801.1 597.5M801.1 597.5L817.2 609.1M793.0 570.3L815.0 580.3M815.0 580.3L837.0 590.4M837.0 590.4L859.6 600.6M813.3 564.2L840.6 572.6M840.6 572.6L868.1 581.0M868.1 581.0L896.2 589.6M829.6 556.9L861.3 563.3M861.3 563.3L893.1 569.8M893.1 569.8L925.6 576.4M841.3 548.6L876.1 552.9M876.1 552.9L911.1 557.1M911.1 557.1L946.8 561.5M848.0 539.8L884.6 541.7M884.6 541.7L921.3 543.5M921.3 543.5L958.9 545.5M849.4 530.7L886.4 530.1M886.4 530.1L923.5 529.6M923.5 529.6L961.4 529.0M845.5 521.6L881.4 518.7M881.4 518.7L917.5 515.7M917.5 515.7L954.3 512.7M836.4 513.0L869.9 507.8M869.9 507.8L903.5 502.5M903.5 502.5L937.9 497.1M822.5 505.2L852.3 497.8M852.3 497.8L882.2 490.5M882.2 490.5L912.7 482.9M804.3 498.4L829.2 489.2M829.2 489.2L854.2 480.0M854.2 480.0L879.8 470.7M782.5 492.9L801.6 482.3M801.6 482.3L820.8 471.7M820.8 471.7L840.4 460.8M757.9 489.0L770.5 477.3M770.5 477.3L783.1 465.6M783.1 465.6L796.0 453.7M731.5 486.7L737.1 474.5M737.1 474.5L742.7 462.2M742.7 462.2L748.3 449.6M704.3 486.2L702.7 473.8M702.7 473.8L701.0 461.4M701.0 461.4L699.3 448.7M677.4 487.5L668.5 475.5M668.5 475.5L659.7 463.4M659.7 463.4L650.6 451.1M677.4 487.5L554.7 501.1M575.7 543.9L554.7 501.1M668.5 475.5L569.2 487.0M539.8 546.8L524.1 512.0M659.7 463.4L587.0 472.1M503.7 549.8L492.9 524.1M650.6 451.1L604.8 457.0M466.8 552.8L461.2 536.4M554.7 501.1L569.2 487.0M554.7 501.1L524.1 512.0M569.2 487.0L587.0 472.1M524.1 512.0L492.9 524.1M587.0 472.1L604.8 457.0M492.9 524.1L461.2 536.4M554.7 501.1L435.3 428.3M569.2 487.0L478.7 431.8M587.0 472.1L525.6 434.7M604.8 457.0L573.3 437.8" stroke="#0a0a0a" stroke-width="1.2" fill="none"/>
<g stroke-width="1.15" fill="none"><path d="M492.9 386.2L535.2 400.9" stroke="url(#g0)"/><path d="M502.8 382.3L552.9 394.0" stroke="url(#g1)"/><path d="M510.3 377.9L566.2 386.1" stroke="url(#g2)"/><path d="M515.0 373.0L574.6 377.4" stroke="url(#g3)"/><path d="M516.8 368.0L577.8 368.4" stroke="url(#g4)"/><path d="M515.6 362.9L575.7 359.4" stroke="url(#g5)"/><path d="M511.5 358.0L568.4 350.6" stroke="url(#g6)"/><path d="M504.6 353.5L556.1 342.5" stroke="url(#g7)"/><path d="M495.2 349.5L539.3 335.4" stroke="url(#g8)"/><path d="M483.7 346.2L518.7 329.4" stroke="url(#g9)"/><path d="M470.4 343.7L495.0 325.0" stroke="url(#g10)"/><path d="M456.0 342.1L469.1 322.2" stroke="url(#g11)"/><path d="M440.9 341.5L442.2 321.1" stroke="url(#g12)"/><path d="M425.7 341.9L415.1 321.8" stroke="url(#g13)"/><path d="M411.1 343.3L388.9 324.3" stroke="url(#g14)"/><path d="M397.5 345.6L364.7 328.4" stroke="url(#g15)"/><path d="M385.6 348.7L343.3 334.0" stroke="url(#g16)"/><path d="M375.7 352.6L325.6 340.9" stroke="url(#g17)"/><path d="M368.2 357.0L312.3 348.8" stroke="url(#g18)"/><path d="M363.5 361.9L303.9 357.5" stroke="url(#g19)"/><path d="M361.7 366.9L300.6 366.5" stroke="url(#g20)"/><path d="M362.8 372.0L302.7 375.6" stroke="url(#g21)"/><path d="M366.9 376.9L310.0 384.3" stroke="url(#g22)"/><path d="M373.8 381.4L322.3 392.4" stroke="url(#g23)"/><path d="M383.2 385.4L339.1 399.6" stroke="url(#g24)"/><path d="M437.1 401.3L435.3 428.3" stroke="url(#g25)"/><path d="M168.8 503.8L186.0 484.1" stroke="url(#g26)"/><path d="M153.9 502.8L159.3 482.4" stroke="url(#g27)"/><path d="M138.6 502.9L132.0 482.5" stroke="url(#g28)"/><path d="M123.7 503.9L105.4 484.4" stroke="url(#g29)"/><path d="M109.7 506.0L80.3 488.0" stroke="url(#g30)"/><path d="M97.1 508.8L57.8 493.1" stroke="url(#g31)"/><path d="M86.5 512.5L38.8 499.7" stroke="url(#g32)"/><path d="M78.1 516.8L23.9 507.3" stroke="url(#g33)"/><path d="M72.4 521.5L13.7 515.8" stroke="url(#g34)"/><path d="M69.6 526.5L8.6 524.8" stroke="url(#g35)"/><path d="M69.7 531.7L8.9 533.9" stroke="url(#g36)"/><path d="M72.9 536.7L14.5 542.8" stroke="url(#g37)"/><path d="M78.8 541.4L25.1 551.3" stroke="url(#g38)"/><path d="M87.4 545.6L40.5 558.8" stroke="url(#g39)"/><path d="M98.3 549.1L59.9 565.2" stroke="url(#g40)"/><path d="M111.1 551.9L82.7 570.2" stroke="url(#g41)"/><path d="M125.2 553.8L108.0 573.6" stroke="url(#g42)"/><path d="M140.2 554.8L134.8 575.2" stroke="url(#g43)"/><path d="M155.4 554.7L162.1 575.1" stroke="url(#g44)"/><path d="M170.4 553.7L188.7 573.2" stroke="url(#g45)"/><path d="M184.4 551.6L213.8 569.6" stroke="url(#g46)"/><path d="M197.0 548.8L236.3 564.5" stroke="url(#g47)"/><path d="M207.7 545.1L255.4 557.9" stroke="url(#g48)"/><path d="M216.0 540.8L270.3 550.3" stroke="url(#g49)"/><path d="M221.7 536.1L280.4 541.8" stroke="url(#g50)"/><path d="M235.8 512.4L306.8 499.4" stroke="url(#g51)"/><path d="M635.1 539.0L575.7 543.9" stroke="url(#g52)"/><path d="M640.2 543.8L584.8 552.5" stroke="url(#g53)"/><path d="M648.0 548.2L598.7 560.3" stroke="url(#g54)"/><path d="M658.2 552.0L616.9 567.1" stroke="url(#g55)"/><path d="M670.4 555.0L638.7 572.6" stroke="url(#g56)"/><path d="M684.2 557.3L663.3 576.6" stroke="url(#g57)"/><path d="M698.9 558.5L689.7 578.8" stroke="url(#g58)"/><path d="M714.2 558.8L716.9 579.3" stroke="url(#g59)"/><path d="M729.3 558.1L743.9 578.0" stroke="url(#g60)"/><path d="M743.6 556.4L769.6 575.0" stroke="url(#g61)"/><path d="M756.7 553.8L793.0 570.3" stroke="url(#g62)"/><path d="M768.1 550.3L813.3 564.2" stroke="url(#g63)"/><path d="M777.2 546.2L829.6 556.9" stroke="url(#g64)"/><path d="M783.8 541.6L841.3 548.6" stroke="url(#g65)"/><path d="M787.5 536.7L848.0 539.8" stroke="url(#g66)"/><path d="M788.3 531.6L849.4 530.7" stroke="url(#g67)"/><path d="M786.1 526.5L845.5 521.6" stroke="url(#g68)"/><path d="M781.0 521.7L836.4 513.0" stroke="url(#g69)"/><path d="M773.2 517.3L822.5 505.2" stroke="url(#g70)"/><path d="M763.1 513.5L804.3 498.4" stroke="url(#g71)"/><path d="M750.8 510.4L782.5 492.9" stroke="url(#g72)"/><path d="M737.1 508.2L757.9 489.0" stroke="url(#g73)"/><path d="M722.3 507.0L731.5 486.7" stroke="url(#g74)"/><path d="M707.1 506.7L704.3 486.2" stroke="url(#g75)"/><path d="M692.0 507.4L677.4 487.5" stroke="url(#g76)"/><path d="M624.0 515.2L554.7 501.1" stroke="url(#g77)"/></g>
<path d="M439.5 362.3L492.9 386.2M439.5 362.3L502.8 382.3M439.5 362.3L510.3 377.9M439.5 362.3L515.0 373.0M439.5 362.3L516.8 368.0M439.5 362.3L515.6 362.9M439.5 362.3L511.5 358.0M439.5 362.3L504.6 353.5M439.5 362.3L495.2 349.5M439.5 362.3L483.7 346.2M439.5 362.3L470.4 343.7M439.5 362.3L456.0 342.1M439.5 362.3L440.9 341.5M439.5 362.3L425.7 341.9M439.5 362.3L411.1 343.3M439.5 362.3L397.5 345.6M439.5 362.3L385.6 348.7M439.5 362.3L375.7 352.6M439.5 362.3L368.2 357.0M439.5 362.3L363.5 361.9M439.5 362.3L361.7 366.9M439.5 362.3L362.8 372.0M439.5 362.3L366.9 376.9M439.5 362.3L373.8 381.4M439.5 362.3L383.2 385.4M439.5 362.3L437.1 401.3M492.9 386.2L502.8 382.3M502.8 382.3L510.3 377.9M510.3 377.9L515.0 373.0M515.0 373.0L516.8 368.0M516.8 368.0L515.6 362.9M515.6 362.9L511.5 358.0M511.5 358.0L504.6 353.5M504.6 353.5L495.2 349.5M495.2 349.5L483.7 346.2M483.7 346.2L470.4 343.7M470.4 343.7L456.0 342.1M456.0 342.1L440.9 341.5M440.9 341.5L425.7 341.9M425.7 341.9L411.1 343.3M411.1 343.3L397.5 345.6M397.5 345.6L385.6 348.7M385.6 348.7L375.7 352.6M375.7 352.6L368.2 357.0M368.2 357.0L363.5 361.9M363.5 361.9L361.7 366.9M361.7 366.9L362.8 372.0M362.8 372.0L366.9 376.9M366.9 376.9L373.8 381.4M373.8 381.4L383.2 385.4M383.2 385.4L437.1 401.3M437.1 401.3L492.9 386.2M133.6 531.3L168.8 503.8M133.6 531.3L153.9 502.8M133.6 531.3L138.6 502.9M133.6 531.3L123.7 503.9M133.6 531.3L109.7 506.0M133.6 531.3L97.1 508.8M133.6 531.3L86.5 512.5M133.6 531.3L78.1 516.8M133.6 531.3L72.4 521.5M133.6 531.3L69.6 526.5M133.6 531.3L69.7 531.7M133.6 531.3L72.9 536.7M133.6 531.3L78.8 541.4M133.6 531.3L87.4 545.6M133.6 531.3L98.3 549.1M133.6 531.3L111.1 551.9M133.6 531.3L125.2 553.8M133.6 531.3L140.2 554.8M133.6 531.3L155.4 554.7M133.6 531.3L170.4 553.7M133.6 531.3L184.4 551.6M133.6 531.3L197.0 548.8M133.6 531.3L207.7 545.1M133.6 531.3L216.0 540.8M133.6 531.3L221.7 536.1M133.6 531.3L235.8 512.4M168.8 503.8L153.9 502.8M153.9 502.8L138.6 502.9M138.6 502.9L123.7 503.9M123.7 503.9L109.7 506.0M109.7 506.0L97.1 508.8M97.1 508.8L86.5 512.5M86.5 512.5L78.1 516.8M78.1 516.8L72.4 521.5M72.4 521.5L69.6 526.5M69.6 526.5L69.7 531.7M69.7 531.7L72.9 536.7M72.9 536.7L78.8 541.4M78.8 541.4L87.4 545.6M87.4 545.6L98.3 549.1M98.3 549.1L111.1 551.9M111.1 551.9L125.2 553.8M125.2 553.8L140.2 554.8M140.2 554.8L155.4 554.7M155.4 554.7L170.4 553.7M170.4 553.7L184.4 551.6M184.4 551.6L197.0 548.8M197.0 548.8L207.7 545.1M207.7 545.1L216.0 540.8M216.0 540.8L221.7 536.1M221.7 536.1L235.8 512.4M235.8 512.4L168.8 503.8M723.7 535.4L635.1 539.0M723.7 535.4L640.2 543.8M723.7 535.4L648.0 548.2M723.7 535.4L658.2 552.0M723.7 535.4L670.4 555.0M723.7 535.4L684.2 557.3M723.7 535.4L698.9 558.5M723.7 535.4L714.2 558.8M723.7 535.4L729.3 558.1M723.7 535.4L743.6 556.4M723.7 535.4L756.7 553.8M723.7 535.4L768.1 550.3M723.7 535.4L777.2 546.2M723.7 535.4L783.8 541.6M723.7 535.4L787.5 536.7M723.7 535.4L788.3 531.6M723.7 535.4L786.1 526.5M723.7 535.4L781.0 521.7M723.7 535.4L773.2 517.3M723.7 535.4L763.1 513.5M723.7 535.4L750.8 510.4M723.7 535.4L737.1 508.2M723.7 535.4L722.3 507.0M723.7 535.4L707.1 506.7M723.7 535.4L692.0 507.4M723.7 535.4L624.0 515.2M635.1 539.0L640.2 543.8M640.2 543.8L648.0 548.2M648.0 548.2L658.2 552.0M658.2 552.0L670.4 555.0M670.4 555.0L684.2 557.3M684.2 557.3L698.9 558.5M698.9 558.5L714.2 558.8M714.2 558.8L729.3 558.1M729.3 558.1L743.6 556.4M743.6 556.4L756.7 553.8M756.7 553.8L768.1 550.3M768.1 550.3L777.2 546.2M777.2 546.2L783.8 541.6M783.8 541.6L787.5 536.7M787.5 536.7L788.3 531.6M788.3 531.6L786.1 526.5M786.1 526.5L781.0 521.7M781.0 521.7L773.2 517.3M773.2 517.3L763.1 513.5M763.1 513.5L750.8 510.4M750.8 510.4L737.1 508.2M737.1 508.2L722.3 507.0M722.3 507.0L707.1 506.7M707.1 506.7L692.0 507.4M692.0 507.4L624.0 515.2M624.0 515.2L635.1 539.0" stroke="#f2a22a" stroke-width="1.05" fill="none"/>
<g fill="#000"><circle cx="535.2" cy="400.9" r="2.05"/><circle cx="560.8" cy="409.9" r="2.05"/><circle cx="586.4" cy="418.8" r="2.05"/><circle cx="612.7" cy="428.0" r="2.05"/><circle cx="552.9" cy="394.0" r="2.05"/><circle cx="583.2" cy="401.1" r="2.05"/><circle cx="613.6" cy="408.2" r="2.05"/><circle cx="644.6" cy="415.5" r="2.05"/><circle cx="566.2" cy="386.1" r="2.05"/><circle cx="600.0" cy="391.1" r="2.05"/><circle cx="634.0" cy="396.1" r="2.05"/><circle cx="668.6" cy="401.1" r="2.05"/><circle cx="574.6" cy="377.4" r="2.05"/><circle cx="610.7" cy="380.1" r="2.05"/><circle cx="646.9" cy="382.8" r="2.05"/><circle cx="683.9" cy="385.5" r="2.05"/><circle cx="577.8" cy="368.4" r="2.05"/><circle cx="614.7" cy="368.7" r="2.05"/><circle cx="651.8" cy="368.9" r="2.05"/><circle cx="689.7" cy="369.2" r="2.05"/><circle cx="575.7" cy="359.4" r="2.05"/><circle cx="612.1" cy="357.2" r="2.05"/><circle cx="648.6" cy="355.0" r="2.05"/><circle cx="685.8" cy="352.8" r="2.05"/><circle cx="568.4" cy="350.6" r="2.05"/><circle cx="602.8" cy="346.1" r="2.05"/><circle cx="637.3" cy="341.6" r="2.05"/><circle cx="672.5" cy="337.0" r="2.05"/><circle cx="556.1" cy="342.5" r="2.05"/><circle cx="587.2" cy="335.9" r="2.05"/><circle cx="618.4" cy="329.2" r="2.05"/><circle cx="650.3" cy="322.4" r="2.05"/><circle cx="539.3" cy="335.4" r="2.05"/><circle cx="565.9" cy="326.8" r="2.05"/><circle cx="592.6" cy="318.2" r="2.05"/><circle cx="619.9" cy="309.5" r="2.05"/><circle cx="518.7" cy="329.4" r="2.05"/><circle cx="539.8" cy="319.3" r="2.05"/><circle cx="561.0" cy="309.2" r="2.05"/><circle cx="582.7" cy="298.8" r="2.05"/><circle cx="495.0" cy="325.0" r="2.05"/><circle cx="509.8" cy="313.7" r="2.05"/><circle cx="524.7" cy="302.4" r="2.05"/><circle cx="539.9" cy="290.8" r="2.05"/><circle cx="469.1" cy="322.2" r="2.05"/><circle cx="477.1" cy="310.1" r="2.05"/><circle cx="485.1" cy="298.0" r="2.05"/><circle cx="493.3" cy="285.7" r="2.05"/><circle cx="442.2" cy="321.1" r="2.05"/><circle cx="443.0" cy="308.8" r="2.05"/><circle cx="443.7" cy="296.4" r="2.05"/><circle cx="444.6" cy="283.8" r="2.05"/><circle cx="415.1" cy="321.8" r="2.05"/><circle cx="408.7" cy="309.7" r="2.05"/><circle cx="402.2" cy="297.5" r="2.05"/><circle cx="395.6" cy="285.0" r="2.05"/><circle cx="388.9" cy="324.3" r="2.05"/><circle cx="375.6" cy="312.8" r="2.05"/><circle cx="362.1" cy="301.2" r="2.05"/><circle cx="348.4" cy="289.4" r="2.05"/><circle cx="364.7" cy="328.4" r="2.05"/><circle cx="344.9" cy="318.0" r="2.05"/><circle cx="325.0" cy="307.5" r="2.05"/><circle cx="304.7" cy="296.9" r="2.05"/><circle cx="343.3" cy="334.0" r="2.05"/><circle cx="317.8" cy="325.1" r="2.05"/><circle cx="292.2" cy="316.1" r="2.05"/><circle cx="266.1" cy="307.0" r="2.05"/><circle cx="325.6" cy="340.9" r="2.05"/><circle cx="295.4" cy="333.8" r="2.05"/><circle cx="265.1" cy="326.7" r="2.05"/><circle cx="234.1" cy="319.5" r="2.05"/><circle cx="312.3" cy="348.8" r="2.05"/><circle cx="278.5" cy="343.9" r="2.05"/><circle cx="244.6" cy="338.9" r="2.05"/><circle cx="210.0" cy="333.8" r="2.05"/><circle cx="303.9" cy="357.5" r="2.05"/><circle cx="267.8" cy="354.8" r="2.05"/><circle cx="231.7" cy="352.1" r="2.05"/><circle cx="194.7" cy="349.4" r="2.05"/><circle cx="300.6" cy="366.5" r="2.05"/><circle cx="263.7" cy="366.2" r="2.05"/><circle cx="226.6" cy="366.0" r="2.05"/><circle cx="188.8" cy="365.7" r="2.05"/><circle cx="302.7" cy="375.6" r="2.05"/><circle cx="266.3" cy="377.7" r="2.05"/><circle cx="229.8" cy="379.9" r="2.05"/><circle cx="192.5" cy="382.1" r="2.05"/><circle cx="310.0" cy="384.3" r="2.05"/><circle cx="275.6" cy="388.8" r="2.05"/><circle cx="241.0" cy="393.3" r="2.05"/><circle cx="205.7" cy="397.9" r="2.05"/><circle cx="322.3" cy="392.4" r="2.05"/><circle cx="291.1" cy="399.1" r="2.05"/><circle cx="259.9" cy="405.8" r="2.05"/><circle cx="227.9" cy="412.6" r="2.05"/><circle cx="339.1" cy="399.6" r="2.05"/><circle cx="312.4" cy="408.1" r="2.05"/><circle cx="285.6" cy="416.7" r="2.05"/><circle cx="258.2" cy="425.5" r="2.05"/><circle cx="435.3" cy="428.3" r="2.05"/><circle cx="391.6" cy="431.2" r="2.05"/><circle cx="344.3" cy="433.5" r="2.05"/><circle cx="296.4" cy="435.9" r="2.05"/><circle cx="478.7" cy="431.8" r="2.05"/><circle cx="525.6" cy="434.7" r="2.05"/><circle cx="573.3" cy="437.8" r="2.05"/><circle cx="186.0" cy="484.1" r="2.05"/><circle cx="196.4" cy="472.2" r="2.05"/><circle cx="206.8" cy="460.2" r="2.05"/><circle cx="217.4" cy="448.0" r="2.05"/><circle cx="159.3" cy="482.4" r="2.05"/><circle cx="162.5" cy="470.1" r="2.05"/><circle cx="165.8" cy="457.7" r="2.05"/><circle cx="169.1" cy="445.0" r="2.05"/><circle cx="132.0" cy="482.5" r="2.05"/><circle cx="128.0" cy="470.2" r="2.05"/><circle cx="124.0" cy="457.8" r="2.05"/><circle cx="119.9" cy="445.2" r="2.05"/><circle cx="105.4" cy="484.4" r="2.05"/><circle cx="94.3" cy="472.6" r="2.05"/><circle cx="83.2" cy="460.7" r="2.05"/><circle cx="71.8" cy="448.6" r="2.05"/><circle cx="80.3" cy="488.0" r="2.05"/><circle cx="62.6" cy="477.1" r="2.05"/><circle cx="44.8" cy="466.2" r="2.05"/><circle cx="26.6" cy="455.1" r="2.05"/><circle cx="57.8" cy="493.1" r="2.05"/><circle cx="34.1" cy="483.7" r="2.05"/><circle cx="10.3" cy="474.1" r="2.05"/><circle cx="-14.0" cy="464.4" r="2.05"/><circle cx="38.8" cy="499.7" r="2.05"/><circle cx="10.0" cy="491.9" r="2.05"/><circle cx="-18.9" cy="484.1" r="2.05"/><circle cx="-48.5" cy="476.2" r="2.05"/><circle cx="23.9" cy="507.3" r="2.05"/><circle cx="-8.9" cy="501.6" r="2.05"/><circle cx="-41.8" cy="495.9" r="2.05"/><circle cx="-75.4" cy="490.0" r="2.05"/><circle cx="13.7" cy="515.8" r="2.05"/><circle cx="-21.8" cy="512.3" r="2.05"/><circle cx="-57.4" cy="508.9" r="2.05"/><circle cx="-93.8" cy="505.3" r="2.05"/><circle cx="8.6" cy="524.8" r="2.05"/><circle cx="-28.2" cy="523.7" r="2.05"/><circle cx="-65.2" cy="522.6" r="2.05"/><circle cx="-103.0" cy="521.5" r="2.05"/><circle cx="8.9" cy="533.9" r="2.05"/><circle cx="-27.9" cy="535.3" r="2.05"/><circle cx="-64.8" cy="536.6" r="2.05"/><circle cx="-102.5" cy="538.0" r="2.05"/><circle cx="14.5" cy="542.8" r="2.05"/><circle cx="-20.8" cy="546.6" r="2.05"/><circle cx="-56.3" cy="550.4" r="2.05"/><circle cx="-92.5" cy="554.2" r="2.05"/><circle cx="25.1" cy="551.3" r="2.05"/><circle cx="-7.3" cy="557.2" r="2.05"/><circle cx="-39.9" cy="563.2" r="2.05"/><circle cx="-73.3" cy="569.4" r="2.05"/><circle cx="40.5" cy="558.8" r="2.05"/><circle cx="12.1" cy="566.8" r="2.05"/><circle cx="-16.4" cy="574.8" r="2.05"/><circle cx="-45.5" cy="583.0" r="2.05"/><circle cx="59.9" cy="565.2" r="2.05"/><circle cx="36.7" cy="574.9" r="2.05"/><circle cx="13.4" cy="584.6" r="2.05"/><circle cx="-10.4" cy="594.5" r="2.05"/><circle cx="82.7" cy="570.2" r="2.05"/><circle cx="65.6" cy="581.2" r="2.05"/><circle cx="48.4" cy="592.3" r="2.05"/><circle cx="30.8" cy="603.6" r="2.05"/><circle cx="108.0" cy="573.6" r="2.05"/><circle cx="97.6" cy="585.5" r="2.05"/><circle cx="87.2" cy="597.5" r="2.05"/><circle cx="76.5" cy="609.7" r="2.05"/><circle cx="134.8" cy="575.2" r="2.05"/><circle cx="131.6" cy="587.6" r="2.05"/><circle cx="128.3" cy="600.0" r="2.05"/><circle cx="124.9" cy="612.7" r="2.05"/><circle cx="162.1" cy="575.1" r="2.05"/><circle cx="166.1" cy="587.5" r="2.05"/><circle cx="170.1" cy="599.9" r="2.05"/><circle cx="174.2" cy="612.6" r="2.05"/><circle cx="188.7" cy="573.2" r="2.05"/><circle cx="199.9" cy="585.1" r="2.05"/><circle cx="211.0" cy="597.0" r="2.05"/><circle cx="222.4" cy="609.1" r="2.05"/><circle cx="213.8" cy="569.6" r="2.05"/><circle cx="231.6" cy="580.5" r="2.05"/><circle cx="249.5" cy="591.5" r="2.05"/><circle cx="267.7" cy="602.6" r="2.05"/><circle cx="236.3" cy="564.5" r="2.05"/><circle cx="260.1" cy="574.0" r="2.05"/><circle cx="284.0" cy="583.5" r="2.05"/><circle cx="308.4" cy="593.3" r="2.05"/><circle cx="255.4" cy="557.9" r="2.05"/><circle cx="284.2" cy="565.7" r="2.05"/><circle cx="313.2" cy="573.5" r="2.05"/><circle cx="342.8" cy="581.5" r="2.05"/><circle cx="270.3" cy="550.3" r="2.05"/><circle cx="303.1" cy="556.0" r="2.05"/><circle cx="336.1" cy="561.7" r="2.05"/><circle cx="369.7" cy="567.6" r="2.05"/><circle cx="280.4" cy="541.8" r="2.05"/><circle cx="315.9" cy="545.3" r="2.05"/><circle cx="351.6" cy="548.7" r="2.05"/><circle cx="388.1" cy="552.3" r="2.05"/><circle cx="306.8" cy="499.4" r="2.05"/><circle cx="336.1" cy="510.6" r="2.05"/><circle cx="365.6" cy="523.2" r="2.05"/><circle cx="395.8" cy="536.0" r="2.05"/><circle cx="294.1" cy="485.0" r="2.05"/><circle cx="278.3" cy="469.9" r="2.05"/><circle cx="262.5" cy="454.6" r="2.05"/><circle cx="575.7" cy="543.9" r="2.05"/><circle cx="539.8" cy="546.8" r="2.05"/><circle cx="503.7" cy="549.8" r="2.05"/><circle cx="466.8" cy="552.8" r="2.05"/><circle cx="584.8" cy="552.5" r="2.05"/><circle cx="551.2" cy="557.7" r="2.05"/><circle cx="517.6" cy="563.0" r="2.05"/><circle cx="483.2" cy="568.4" r="2.05"/><circle cx="598.7" cy="560.3" r="2.05"/><circle cx="568.9" cy="567.7" r="2.05"/><circle cx="538.9" cy="575.1" r="2.05"/><circle cx="508.3" cy="582.6" r="2.05"/><circle cx="616.9" cy="567.1" r="2.05"/><circle cx="591.9" cy="576.3" r="2.05"/><circle cx="566.8" cy="585.5" r="2.05"/><circle cx="541.2" cy="594.9" r="2.05"/><circle cx="638.7" cy="572.6" r="2.05"/><circle cx="619.6" cy="583.2" r="2.05"/><circle cx="600.3" cy="593.9" r="2.05"/><circle cx="580.7" cy="604.8" r="2.05"/><circle cx="663.3" cy="576.6" r="2.05"/><circle cx="650.7" cy="588.2" r="2.05"/><circle cx="638.0" cy="600.0" r="2.05"/><circle cx="625.1" cy="612.0" r="2.05"/><circle cx="689.7" cy="578.8" r="2.05"/><circle cx="684.2" cy="591.1" r="2.05"/><circle cx="678.6" cy="603.4" r="2.05"/><circle cx="672.8" cy="616.0" r="2.05"/><circle cx="716.9" cy="579.3" r="2.05"/><circle cx="718.6" cy="591.7" r="2.05"/><circle cx="720.3" cy="604.2" r="2.05"/><circle cx="722.0" cy="616.9" r="2.05"/><circle cx="743.9" cy="578.0" r="2.05"/><circle cx="752.8" cy="590.1" r="2.05"/><circle cx="761.7" cy="602.2" r="2.05"/><circle cx="770.8" cy="614.6" r="2.05"/><circle cx="769.6" cy="575.0" r="2.05"/><circle cx="785.3" cy="586.2" r="2.05"/><circle cx="801.1" cy="597.5" r="2.05"/><circle cx="817.2" cy="609.1" r="2.05"/><circle cx="793.0" cy="570.3" r="2.05"/><circle cx="815.0" cy="580.3" r="2.05"/><circle cx="837.0" cy="590.4" r="2.05"/><circle cx="859.6" cy="600.6" r="2.05"/><circle cx="813.3" cy="564.2" r="2.05"/><circle cx="840.6" cy="572.6" r="2.05"/><circle cx="868.1" cy="581.0" r="2.05"/><circle cx="896.2" cy="589.6" r="2.05"/><circle cx="829.6" cy="556.9" r="2.05"/><circle cx="861.3" cy="563.3" r="2.05"/><circle cx="893.1" cy="569.8" r="2.05"/><circle cx="925.6" cy="576.4" r="2.05"/><circle cx="841.3" cy="548.6" r="2.05"/><circle cx="876.1" cy="552.9" r="2.05"/><circle cx="911.1" cy="557.1" r="2.05"/><circle cx="946.8" cy="561.5" r="2.05"/><circle cx="848.0" cy="539.8" r="2.05"/><circle cx="884.6" cy="541.7" r="2.05"/><circle cx="921.3" cy="543.5" r="2.05"/><circle cx="958.9" cy="545.5" r="2.05"/><circle cx="849.4" cy="530.7" r="2.05"/><circle cx="886.4" cy="530.1" r="2.05"/><circle cx="923.5" cy="529.6" r="2.05"/><circle cx="961.4" cy="529.0" r="2.05"/><circle cx="845.5" cy="521.6" r="2.05"/><circle cx="881.4" cy="518.7" r="2.05"/><circle cx="917.5" cy="515.7" r="2.05"/><circle cx="954.3" cy="512.7" r="2.05"/><circle cx="836.4" cy="513.0" r="2.05"/><circle cx="869.9" cy="507.8" r="2.05"/><circle cx="903.5" cy="502.5" r="2.05"/><circle cx="937.9" cy="497.1" r="2.05"/><circle cx="822.5" cy="505.2" r="2.05"/><circle cx="852.3" cy="497.8" r="2.05"/><circle cx="882.2" cy="490.5" r="2.05"/><circle cx="912.7" cy="482.9" r="2.05"/><circle cx="804.3" cy="498.4" r="2.05"/><circle cx="829.2" cy="489.2" r="2.05"/><circle cx="854.2" cy="480.0" r="2.05"/><circle cx="879.8" cy="470.7" r="2.05"/><circle cx="782.5" cy="492.9" r="2.05"/><circle cx="801.6" cy="482.3" r="2.05"/><circle cx="820.8" cy="471.7" r="2.05"/><circle cx="840.4" cy="460.8" r="2.05"/><circle cx="757.9" cy="489.0" r="2.05"/><circle cx="770.5" cy="477.3" r="2.05"/><circle cx="783.1" cy="465.6" r="2.05"/><circle cx="796.0" cy="453.7" r="2.05"/><circle cx="731.5" cy="486.7" r="2.05"/><circle cx="737.1" cy="474.5" r="2.05"/><circle cx="742.7" cy="462.2" r="2.05"/><circle cx="748.3" cy="449.6" r="2.05"/><circle cx="704.3" cy="486.2" r="2.05"/><circle cx="702.7" cy="473.8" r="2.05"/><circle cx="701.0" cy="461.4" r="2.05"/><circle cx="699.3" cy="448.7" r="2.05"/><circle cx="677.4" cy="487.5" r="2.05"/><circle cx="668.5" cy="475.5" r="2.05"/><circle cx="659.7" cy="463.4" r="2.05"/><circle cx="650.6" cy="451.1" r="2.05"/><circle cx="554.7" cy="501.1" r="2.05"/><circle cx="569.2" cy="487.0" r="2.05"/><circle cx="587.0" cy="472.1" r="2.05"/><circle cx="604.8" cy="457.0" r="2.05"/><circle cx="524.1" cy="512.0" r="2.05"/><circle cx="492.9" cy="524.1" r="2.05"/><circle cx="461.2" cy="536.4" r="2.05"/></g>
<g fill="#ff8a00"><circle cx="492.9" cy="386.2" r="2.05"/><circle cx="502.8" cy="382.3" r="2.05"/><circle cx="510.3" cy="377.9" r="2.05"/><circle cx="515.0" cy="373.0" r="2.05"/><circle cx="516.8" cy="368.0" r="2.05"/><circle cx="515.6" cy="362.9" r="2.05"/><circle cx="511.5" cy="358.0" r="2.05"/><circle cx="504.6" cy="353.5" r="2.05"/><circle cx="495.2" cy="349.5" r="2.05"/><circle cx="483.7" cy="346.2" r="2.05"/><circle cx="470.4" cy="343.7" r="2.05"/><circle cx="456.0" cy="342.1" r="2.05"/><circle cx="440.9" cy="341.5" r="2.05"/><circle cx="425.7" cy="341.9" r="2.05"/><circle cx="411.1" cy="343.3" r="2.05"/><circle cx="397.5" cy="345.6" r="2.05"/><circle cx="385.6" cy="348.7" r="2.05"/><circle cx="375.7" cy="352.6" r="2.05"/><circle cx="368.2" cy="357.0" r="2.05"/><circle cx="363.5" cy="361.9" r="2.05"/><circle cx="361.7" cy="366.9" r="2.05"/><circle cx="362.8" cy="372.0" r="2.05"/><circle cx="366.9" cy="376.9" r="2.05"/><circle cx="373.8" cy="381.4" r="2.05"/><circle cx="383.2" cy="385.4" r="2.05"/><circle cx="437.1" cy="401.3" r="2.05"/><circle cx="439.5" cy="362.3" r="2.05"/><circle cx="168.8" cy="503.8" r="2.05"/><circle cx="153.9" cy="502.8" r="2.05"/><circle cx="138.6" cy="502.9" r="2.05"/><circle cx="123.7" cy="503.9" r="2.05"/><circle cx="109.7" cy="506.0" r="2.05"/><circle cx="97.1" cy="508.8" r="2.05"/><circle cx="86.5" cy="512.5" r="2.05"/><circle cx="78.1" cy="516.8" r="2.05"/><circle cx="72.4" cy="521.5" r="2.05"/><circle cx="69.6" cy="526.5" r="2.05"/><circle cx="69.7" cy="531.7" r="2.05"/><circle cx="72.9" cy="536.7" r="2.05"/><circle cx="78.8" cy="541.4" r="2.05"/><circle cx="87.4" cy="545.6" r="2.05"/><circle cx="98.3" cy="549.1" r="2.05"/><circle cx="111.1" cy="551.9" r="2.05"/><circle cx="125.2" cy="553.8" r="2.05"/><circle cx="140.2" cy="554.8" r="2.05"/><circle cx="155.4" cy="554.7" r="2.05"/><circle cx="170.4" cy="553.7" r="2.05"/><circle cx="184.4" cy="551.6" r="2.05"/><circle cx="197.0" cy="548.8" r="2.05"/><circle cx="207.7" cy="545.1" r="2.05"/><circle cx="216.0" cy="540.8" r="2.05"/><circle cx="221.7" cy="536.1" r="2.05"/><circle cx="235.8" cy="512.4" r="2.05"/><circle cx="133.6" cy="531.3" r="2.05"/><circle cx="635.1" cy="539.0" r="2.05"/><circle cx="640.2" cy="543.8" r="2.05"/><circle cx="648.0" cy="548.2" r="2.05"/><circle cx="658.2" cy="552.0" r="2.05"/><circle cx="670.4" cy="555.0" r="2.05"/><circle cx="684.2" cy="557.3" r="2.05"/><circle cx="698.9" cy="558.5" r="2.05"/><circle cx="714.2" cy="558.8" r="2.05"/><circle cx="729.3" cy="558.1" r="2.05"/><circle cx="743.6" cy="556.4" r="2.05"/><circle cx="756.7" cy="553.8" r="2.05"/><circle cx="768.1" cy="550.3" r="2.05"/><circle cx="777.2" cy="546.2" r="2.05"/><circle cx="783.8" cy="541.6" r="2.05"/><circle cx="787.5" cy="536.7" r="2.05"/><circle cx="788.3" cy="531.6" r="2.05"/><circle cx="786.1" cy="526.5" r="2.05"/><circle cx="781.0" cy="521.7" r="2.05"/><circle cx="773.2" cy="517.3" r="2.05"/><circle cx="763.1" cy="513.5" r="2.05"/><circle cx="750.8" cy="510.4" r="2.05"/><circle cx="737.1" cy="508.2" r="2.05"/><circle cx="722.3" cy="507.0" r="2.05"/><circle cx="707.1" cy="506.7" r="2.05"/><circle cx="692.0" cy="507.4" r="2.05"/><circle cx="624.0" cy="515.2" r="2.05"/><circle cx="723.7" cy="535.4" r="2.05"/></g>
<g transform="translate(432.5,476.5)">
<circle r="9.5" fill="none" stroke="#fff" stroke-width="1.6"/>
<circle r="9.5" fill="none" stroke="#e02020" stroke-width="1.6" stroke-dasharray="3.7 3.75"/>
<path d="M-20 0H-4M4 0H21M0 -20V-4M0 4V20" stroke="#000" stroke-width="1.4"/>
<circle r="2.8" fill="#f5a020" stroke="#3a3a3a" stroke-width="0.7"/>
</g>
</svg>
<div id="topstrip"></div>
<div class="tsep" style="left:8.4px"></div><div class="tsep" style="left:74px"></div><div class="tsep" style="left:145.4px"></div><div class="tsep" style="left:231.6px"></div><div class="tsep" style="left:289.8px"></div><div class="tsep" style="left:360.7px"></div><div class="tsep" style="left:431.1px"></div><div class="tsep" style="left:512.6px"></div><div class="tsep" style="left:577px"></div><div class="abs" style="left:596px;top:0;width:236px;height:3px;background:#232323"></div>
<div id="header"></div>
<div class="modebtn" style="left:-10px;width:39px;text-align:right;padding-right:6px">ertex</div>
<div class="modebtn" style="left:32.4px;width:36px">Edge</div>
<div class="modebtn" style="left:71.6px;width:35px">Face</div>
<div class="modebtn" style="left:110.3px;width:27px">UV</div>
<!-- header buttons -->
<div class="btn" style="left:303px;top:9px;width:78px;height:18px;background:#2c2c2c"></div>
<svg class="abs" style="left:303px;top:9px" width="78" height="18">
 <g stroke="#e2e2e2" stroke-width="1.05" fill="none" stroke-linecap="round">
  <path d="M6.7 11.5V2.4M4.7 4.4L6.7 2.4L8.7 4.4"/>
  <path d="M8.2 13H18.2M16.2 11L18.2 13L16.2 15"/>
  <path d="M8.2 11.5L16.6 5.2M13.6 5.2H16.6V8.2"/>
  <circle cx="6.7" cy="13" r="1.5"/>
 </g>
 <path d="M69 7.5l3.5 3.5l3.5 -3.5" stroke="#c8c8c8" stroke-width="1.4" fill="none" stroke-linecap="round" stroke-linejoin="round"/>
</svg>
<div class="abs t" style="left:328.3px;top:9px;color:#dcdcdc;font-size:11px;line-height:18px">Global</div>
<div class="btn" style="left:388px;top:9px;width:30px;height:18px;background:#2c2c2c"></div>
<svg class="abs" style="left:388px;top:9px" width="30" height="18">
 <g stroke="#d8d8d8" stroke-width="1.2" fill="none">
  <path d="M4.5 2.5L8 6M15 2.5L11.5 6M4.5 15.5L8 12M15 15.5L11.5 12"/>
  <circle cx="9.75" cy="9" r="4.3"/>
 </g>
 <circle cx="9.75" cy="9" r="2.3" fill="#e0e0e0"/>
 <path d="M21.5 7.5l3.5 3.5l3.5 -3.5" stroke="#c8c8c8" stroke-width="1.4" fill="none" stroke-linecap="round" stroke-linejoin="round"/>
</svg>
<div class="btn" style="left:425px;top:9px;width:50px;height:18px;background:#2c2c2c"></div>
<div class="abs" style="left:425px;top:9px;width:18.5px;height:18px;background:#545454;border-radius:4px 0 0 4px"></div>
<svg class="abs" style="left:425px;top:9px" width="50" height="18">
 <path d="M11 14.66L14.18 11.48A5.2 5.2 0 0 0 6.82 4.12L3.64 7.3L5.62 9.28L8.8 6.1A2.4 2.4 0 0 1 12.2 9.5L9.02 12.68Z" stroke="#b8b8b8" stroke-width="1.1" fill="none" stroke-linejoin="round"/>
 <rect x="33.1" y="2" width="4.1" height="4" fill="#e8e8e8"/>
 <path d="M23.5 11.8H35.4M23.5 7.8V14.7M29.2 7.8V14.7M35.4 7.8V14.7M26.4 10.3V13.3M32.1 10.3V13.3" stroke="#dedede" stroke-width="1.1" fill="none"/>
 <path d="M40.8 7.5l3.5 3.5l3.5 -3.5" stroke="#c8c8c8" stroke-width="1.4" fill="none" stroke-linecap="round" stroke-linejoin="round"/>
</svg>
<div class="btn" style="left:482px;top:9px;width:50px;height:18px;background:#767a83"></div><div class="abs" style="left:500px;top:9px;width:1px;height:18px;background:#3f4450"></div>
<div class="abs" style="left:482px;top:9px;width:18px;height:18px;background:#5680c2;border-radius:4px 0 0 4px"></div>
<svg class="abs" style="left:482px;top:9px" width="50" height="18">
 <circle cx="8.8" cy="8.9" r="6.6" stroke="#fff" stroke-width="0.9" fill="none"/>
 <circle cx="8.8" cy="8.9" r="4.2" stroke="#fff" stroke-width="1.3" fill="none"/>
 <circle cx="8.8" cy="8.9" r="2.1" fill="#fff"/>
 <path d="M23.5 13.9C23.5 8.5 26 5.9 30 5.9S36.5 8.5 36.5 13.9" stroke="#f2f2f2" stroke-width="1.4" fill="none"/>
 <path d="M40.8 7.5l3.5 3.5l3.5 -3.5" stroke="#c8c8c8" stroke-width="1.4" fill="none" stroke-linecap="round" stroke-linejoin="round"/>
</svg>
<div id="popup">
 <div class="cb" style="top:13.9px"></div><div class="cbl" style="top:11.9px">Connected Only</div>
 <div class="cb" style="top:35.5px"></div><div class="cbl" style="top:33.7px">Projected from View</div>
 <div id="list">
<div class="row" style="top:0px;height:18px;background:transparent"><svg class="ico" width="22" height="16" style="top:1px"><path d="M3.8 14C6.5 14 7.5 2.3 10.8 2.3C14 2.3 15 14 17.7 14" stroke="#dcdcdc" stroke-width="1.15" fill="none"/></svg><span class="rt" style="top:-0.5px">Smooth</span></div>
<div class="sep" style="top:18px"></div>
<div class="row" style="top:19px;height:19px;background:#7294c9"><svg class="ico" width="22" height="16" style="top:2px"><path d="M3.8 13.1C3.8 7 7 3.9 10.8 3.9S17.7 7 17.7 13.1" stroke="#dcdcdc" stroke-width="1.15" fill="none"/></svg><span class="rt" style="top:0.5px">Sphere</span></div>
<div class="sep" style="top:38px"></div>
<div class="row" style="top:39px;height:19px;background:transparent"><svg class="ico" width="22" height="16" style="top:2px"><path d="M3.8 12.9C5.5 9.5 8 3.2 10.8 3.2S16.2 9.5 17.7 12.9" stroke="#dcdcdc" stroke-width="1.15" fill="none"/></svg><span class="rt" style="top:0.5px">Root</span></div>
<div class="sep" style="top:58px"></div>
<div class="row" style="top:59px;height:19px;background:transparent"><svg class="ico" width="22" height="16" style="top:2px"><path d="M4.9 13.3C5.5 6 8 2.3 10.9 2.3S16.4 6 17 13.3" stroke="#dcdcdc" stroke-width="1.15" fill="none"/></svg><span class="rt" style="top:0.5px">Inverse Square</span></div>
<div class="sep" style="top:78px"></div>
<div class="row" style="top:79px;height:19px;background:transparent"><svg class="ico" width="22" height="16" style="top:2px"><path d="M3.8 13.1C8 12 10 8 10.8 3.1C11.6 8 13.5 12 17 13.1" stroke="#dcdcdc" stroke-width="1.15" fill="none"/></svg><span class="rt" style="top:0.5px">Sharp</span></div>
<div class="sep" style="top:98px"></div>
<div class="row" style="top:99px;height:19px;background:transparent"><svg class="ico" width="22" height="16" style="top:2px"><path d="M3.8 13.1L10.8 3.5L17.7 13.1" stroke="#dcdcdc" stroke-width="1.15" fill="none"/></svg><span class="rt" style="top:0.5px">Linear</span></div>
<div class="sep" style="top:118px"></div>
<div class="row" style="top:119px;height:19px;background:transparent"><svg class="ico" width="22" height="16" style="top:2px"><path d="M4.1 10.8V6.7H17.7V10.8" stroke="#dcdcdc" stroke-width="1.15" fill="none"/></svg><span class="rt" style="top:0.5px">Constant</span></div>
<div class="sep" style="top:138px"></div>
<div class="row" style="top:139px;height:19px;background:transparent"><svg class="ico" width="22" height="16" style="top:2px"><path d="M4.1 13.9C5.5 10 6.5 7.4 8.1 7.4C9.3 7.4 9.8 8.5 10.5 8.2C11.5 7.5 12.5 2.6 14 2.6C15.5 2.6 16 13.5 17.7 13.5" stroke="#dcdcdc" stroke-width="1.15" fill="none"/></svg><span class="rt" style="top:0.5px">Random</span></div>
 </div>
</div>
<div id="ptr"></div>
<div id="tip">
 <div class="tt" style="top:10px;color:#e6e6e6">Falloff type for proportional editing mode: <span style="color:#9fb6de">Sphere</span></div>
 <div class="tt" style="top:30px;color:#bcbcbc">Spherical falloff</div>
</div>
</body></html>
